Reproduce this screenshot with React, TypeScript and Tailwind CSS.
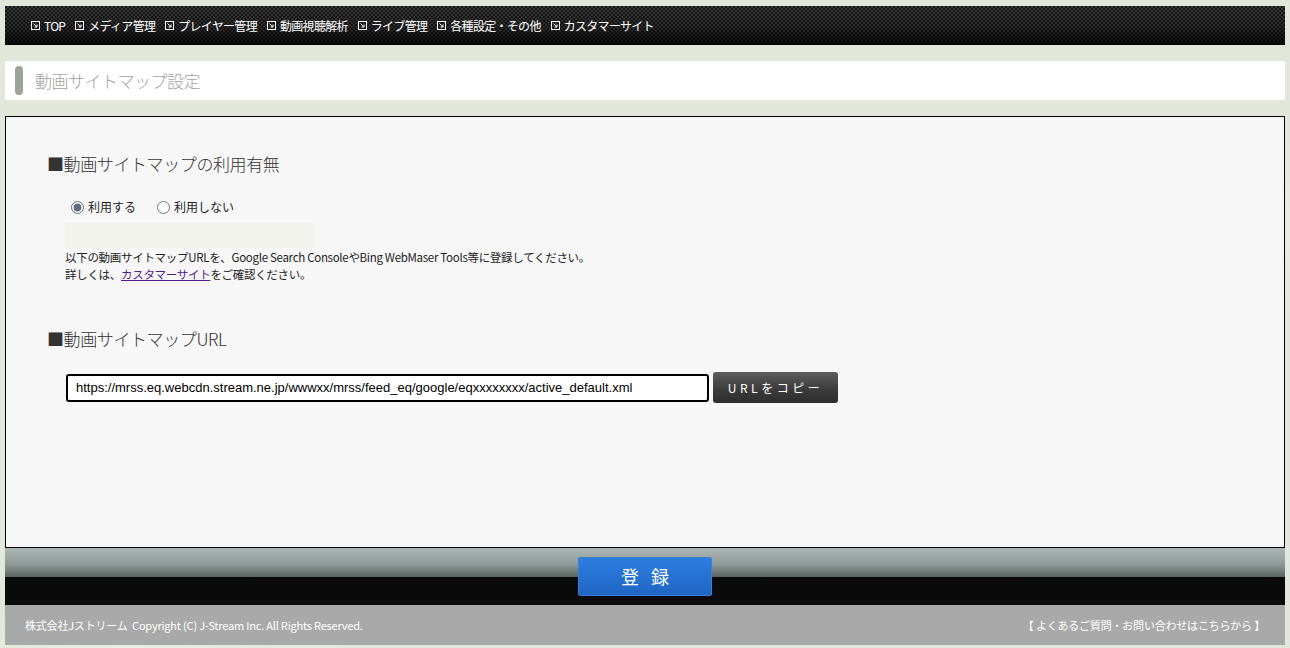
import React from "react";

const NAV_ITEMS = [
  "TOP",
  "メディア管理",
  "プレイヤー管理",
  "動画視聴解析",
  "ライブ管理",
  "各種設定・その他",
  "カスタマーサイト",
];

const SITEMAP_URL =
  "https://mrss.eq.webcdn.stream.ne.jp/wwwxx/mrss/feed_eq/google/eqxxxxxxxx/active_default.xml";

function LinkBox() {
  return (
    <svg width="9" height="9" viewBox="0 0 9 9" fill="none" className="shrink-0">
      <rect x="0.5" y="0.5" width="8" height="8" stroke="white" strokeWidth="1" />
      <path d="M2.5 2.5L6 6M6 3.5V6H3.5" stroke="white" strokeWidth="1" />
    </svg>
  );
}

export default function App() {
  return (
    <div className="min-h-[648px] bg-[#e1e7da] bg-[linear-gradient(160deg,#e1e7da_0%,#e1e7da_55%,#e8eee1_62%,#e1e7da_70%,#e1e7da_100%)] px-[5px] pt-[6px] pb-[3px] font-['Noto_Sans_CJK_JP','Noto_Sans',sans-serif] text-[#222]">
      {/* ── Global nav ─────────────────────────────── */}
      <div className="h-[39px] bg-[#1a1a1a] bg-[repeating-conic-gradient(#3a3a3a_0%_25%,#151515_0%_50%)] bg-size-[4px_4px] bg-[length:4px_4px]">
        <div className="flex h-full items-center gap-[10px] bg-[linear-gradient(to_bottom,rgba(0,0,0,0)_0%,rgba(0,0,0,0.25)_55%,rgba(0,0,0,0.85)_100%)] pl-[26px] text-[12px] tracking-[-0.7px] text-white">
          {NAV_ITEMS.map((item) => (
            <span key={item} className="flex items-center gap-[4px] whitespace-nowrap">
              <LinkBox />
              {item}
            </span>
          ))}
        </div>
      </div>

      {/* ── Page title ─────────────────────────────── */}
      <div className="mt-[16px] flex h-[39px] items-center gap-[12px] rounded-[2px] bg-white pl-[10px]">
        <div className="h-[29px] w-[8px] rounded-[4px] bg-[#9aa597]" />
        <h1 className="text-[17px] font-light tracking-[-0.5px] text-[#a3a3a3]">動画サイトマップ設定</h1>
      </div>

      {/* ── Main panel ─────────────────────────────── */}
      <div className="mt-[16px] h-[432px] border border-black bg-[#f7f7f7] pl-[41px] pt-[35px]">
        <h2 className="text-[17px] font-light leading-[24px] tracking-[-0.4px] text-[#333]">■動画サイトマップの利用有無</h2>

        <div className="ml-[24px] mt-[22px] flex items-center text-[12px]">
          <label className="flex items-center gap-[4px]">
            <input type="radio" name="use" defaultChecked className="m-0 h-[13px] w-[13px] accent-[#5f6f7c]" />
            利用する
          </label>
          <label className="ml-[21px] flex items-center gap-[4px]">
            <input type="radio" name="use" className="m-0 h-[13px] w-[13px] accent-[#5f6f7c]" />
            利用しない
          </label>
        </div>

        <div className="ml-[18px] mt-[7px] h-[25px] w-[250px] bg-[#f1f3ec]" />

        <p className="ml-[18px] mt-[1px] text-[11.5px] leading-[17px] tracking-[-0.3px]">
          以下の動画サイトマップURLを、Google Search ConsoleやBing WebMaser Tools等に登録してください。
          <br />
          詳しくは、
          <a href="#" className="text-[#551a8b] underline">カスタマーサイト</a>
          をご確認ください。
        </p>

        <h2 className="mt-[44px] text-[17px] font-light leading-[24px] tracking-[-0.4px] text-[#333]">■動画サイトマップURL</h2>

        <div className="ml-[19px] mt-[21px] flex items-center gap-[4px]">
          <input
            readOnly
            value={SITEMAP_URL}
            className="h-[28px] w-[643px] rounded-[3px] border-2 border-black bg-white px-[8px] font-['Liberation_Sans',Arial,sans-serif] text-[13px] text-black outline-none"
          />
          <button className="h-[31px] w-[125px] rounded-[3px] bg-[linear-gradient(to_bottom,#5c5c5c_0%,#3a3a3a_60%,#2e2e2e_100%)] text-[12px] tracking-[3.5px] text-white">
            URLをコピー
          </button>
        </div>
      </div>

      {/* ── Submit bar ─────────────────────────────── */}
      <div className="flex h-[57px] items-center justify-center bg-[linear-gradient(to_bottom,#acb7b6_0px,#8f9a98_16px,#5b6461_29px,#0a0a0a_29px,#0a0a0a_100%)]">
        <button className="h-[39px] w-[134px] rounded-[2px] border border-[#3f7fd0] bg-[linear-gradient(to_bottom,#2d7ee0_0%,#1f66c4_100%)] pl-[12px] text-[18px] tracking-[12px] text-white">
          登録
        </button>
      </div>

      {/* ── Footer ─────────────────────────────────── */}
      <div className="flex h-[40px] items-center justify-between bg-[#a9a9a9] px-[20px] text-[11px] tracking-[-0.2px] text-white">
        <span>株式会社Jストリーム&nbsp; Copyright (C) J-Stream Inc. All Rights Reserved.</span>
        <a href="#" className="whitespace-nowrap">【 よくあるご質問・お問い合わせはこちらから 】</a>
      </div>
    </div>
  );
}
